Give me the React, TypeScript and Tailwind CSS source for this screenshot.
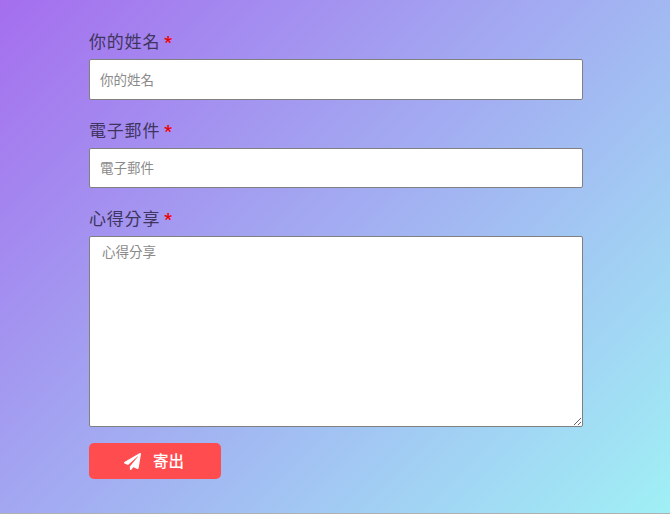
import { FaPaperPlane } from "react-icons/fa";

const font = "font-['Noto_Sans_CJK_TC','Roboto',sans-serif]";

function Label({ children }: { children: string }) {
  return (
    <label className="flex items-baseline h-[27px] gap-[4px] text-[17px] leading-[27px] tracking-[0.8px] font-normal text-[#3f3560] mb-[5px]">
      <span>{children}</span>
      <span className="text-[#f00000] font-bold text-[17px] tracking-normal font-['Roboto',sans-serif]">*</span>
    </label>
  );
}

export default function App() {
  return (
    <div className={`${font} w-[670px] h-[514px] overflow-hidden border-b border-[#b0b0b0] bg-[linear-gradient(135deg,#a56eee_0%,#a0f0f5_100%)]`}>
      <form className="w-[494px] ml-[89px] pt-[27px] flex flex-col">
        <Label>你的姓名</Label>
        <input
          placeholder="你的姓名"
          className="block w-full h-[41px] px-[10px] pb-[2px] text-[13.5px] bg-white border border-[#808080] rounded-[2px] outline-none placeholder:text-[#8a8a8a] mb-[16px]"
        />
        <Label>電子郵件</Label>
        <input
          placeholder="電子郵件"
          className="block w-full h-[40px] px-[10px] pb-[2px] text-[13.5px] bg-white border border-[#808080] rounded-[2px] outline-none placeholder:text-[#8a8a8a] mb-[16px]"
        />
        <Label>心得分享</Label>
        <textarea
          placeholder="心得分享"
          className="block w-full h-[191px] px-[12px] py-[4px] text-[13.5px] leading-[20px] bg-white border border-[#808080] rounded-[2px] outline-none placeholder:text-[#8a8a8a] mb-[16px]"
        />
        <button
          type="button"
          className="flex items-center justify-center gap-[12px] w-[132px] h-[36px] rounded-[5px] bg-[#ff4d4f] text-white text-[15.5px] font-medium"
        >
          <FaPaperPlane className="w-[17px] h-[17px] -ml-[2px]" />
          <span>寄出</span>
        </button>
      </form>
    </div>
  );
}
